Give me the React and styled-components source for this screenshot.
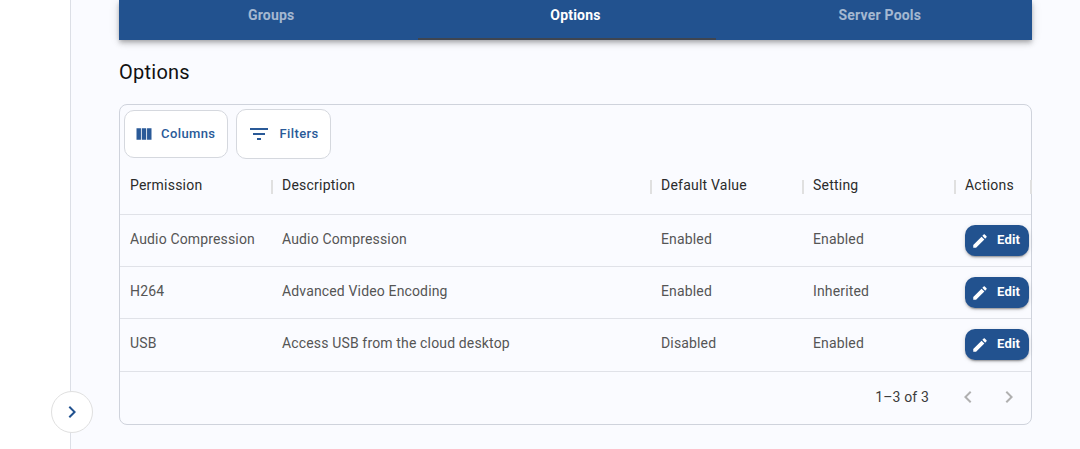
import React from 'react';
import styled, { createGlobalStyle } from 'styled-components';

const GlobalStyle = createGlobalStyle`
  html, body { margin: 0; padding: 0; height: 100%; overflow: hidden; background: #fff; }
  body { font-family: Roboto, "Liberation Sans", sans-serif; }
`;

const Page = styled.div`
  display: flex;
  height: 449px;
  overflow: hidden;
`;

const Sidebar = styled.aside`
  position: relative;
  flex: 0 0 70px;
  background: #fff;
  border-right: 1px solid #dcdfe6;
`;

const CollapseButton = styled.button`
  position: absolute;
  left: 51px;
  top: 391px;
  width: 42px;
  height: 42px;
  padding: 0;
  display: flex;
  align-items: center;
  justify-content: center;
  background: #fff;
  border: 1px solid #e0e0e0;
  border-radius: 50%;
  color: #22528f;
`;

const Main = styled.main`
  flex: 1;
  background: #fafbff;
  padding: 0 48px;
`;

const TabBar = styled.div`
  position: relative;
  display: grid;
  grid-template-columns: repeat(3, 1fr);
  height: 40px;
  background: #22528f;
  box-shadow: 0 2px 4px -1px rgba(0,0,0,.2), 0 4px 5px 0 rgba(0,0,0,.14), 0 1px 10px 0 rgba(0,0,0,.12);
`;

const Tab = styled.div`
  display: flex;
  justify-content: center;
  padding-top: 7px;
  font-size: 14px;
  line-height: 16px;
  font-weight: 700;
  letter-spacing: .2px;
  color: ${p => (p.$active ? '#fff' : 'rgba(255,255,255,.6)')};
`;

const TabIndicator = styled.span`
  position: absolute;
  left: 299px;
  bottom: 0;
  width: 298px;
  height: 2px;
  background: #3f4550;
`;

const Title = styled.h2`
  margin: 20px 0 0;
  font-size: 20px;
  line-height: 24px;
  font-weight: 400;
  letter-spacing: .25px;
  color: #111;
`;

const TableCard = styled.section`
  margin-top: 20px;
  height: 321px;
  box-sizing: border-box;
  border: 1px solid #cfd3dc;
  border-radius: 8px;
  display: flex;
  flex-direction: column;
`;

const Toolbar = styled.div`
  display: flex;
  align-items: center;
  gap: 8px;
  height: 58px;
  padding: 0 4px;
`;

const ToolButton = styled.button`
  display: flex;
  align-items: center;
  box-sizing: border-box;
  height: ${p => p.$h}px;
  gap: ${p => p.$gap}px;
  padding: 0 ${p => p.$padR}px 0 ${p => p.$padL}px;
  background: #fff;
  border: 1px solid #d5d8de;
  border-radius: 10px;
  color: #2a5a98;
  font-family: inherit;
  font-size: 13px;
  font-weight: 500;
  letter-spacing: .4px;
`;

const ToolLabel = styled.span`
  margin-bottom: 2px;
`;

const Row = styled.div`
  display: grid;
  grid-template-columns: 152px 379px 152px 152px 76px;
  height: ${p => p.$h}px;
  padding-bottom: ${p => p.$h - 52}px;
  box-sizing: border-box;
  border-bottom: 1px solid #e0e2e8;
  align-items: center;
`;

const HeaderRow = styled(Row)`
  padding-bottom: 0;
`;

const HeaderCell = styled.div`
  position: relative;
  padding: 0 0 7px 10px;
  font-size: 14px;
  font-weight: 400;
  letter-spacing: .22px;
  color: #2b2b2b;
  white-space: nowrap;

  &::after {
    content: '';
    position: absolute;
    right: -1px;
    top: 3px;
    width: 2px;
    height: 14px;
    background: #e0e0e0;
  }
`;

const Cell = styled.div`
  padding: 0 0 4px 10px;
  font-size: 14px;
  letter-spacing: .15px;
  color: #555;
  white-space: nowrap;
`;

const ActionCell = styled.div`
  padding-left: 10px;
`;

const EditButton = styled.button`
  display: flex;
  align-items: center;
  gap: 8px;
  box-sizing: border-box;
  width: 64px;
  height: 31px;
  padding: 0 0 0 6px;
  background: #22528f;
  border: 0;
  border-radius: 10px;
  color: #fff;
  font-family: inherit;
  font-size: 13px;
  font-weight: 700;
  letter-spacing: .2px;
  box-shadow: 0 3px 1px -2px rgba(0,0,0,.2), 0 2px 2px 0 rgba(0,0,0,.14), 0 1px 5px 0 rgba(0,0,0,.12);
`;

const EditLabel = styled.span`
  margin-bottom: 2px;
`;

const Pager = styled.footer`
  flex: 1;
  display: flex;
  align-items: center;
  justify-content: flex-end;
  padding: 0 10px 3px 0;
  font-size: 14px;
  letter-spacing: .15px;
  color: #3c3c3c;
`;

const PagerIcons = styled.div`
  display: flex;
  gap: 17px;
  margin-left: 27px;
  color: #b0b0b0;
`;

const Icon = ({ d, size = 24 }) => (
  <svg width={size} height={size} viewBox="0 0 24 24" fill="currentColor" style={{ flexShrink: 0 }}>
    <path d={d} />
  </svg>
);

const COLUMNS = 'M14.67 5v14H9.33V5h5.34zm1 14H21V5h-5.33v14zm-7.34 0V5H3v14h5.33z';
const FILTER = 'M10 18h4v-2h-4v2zM3 6v2h18V6H3zm3 7h12v-2H6v2z';
const EDIT = 'M3 17.25V21h3.75L17.81 9.94l-3.75-3.75L3 17.25zM20.71 7.04c.39-.39.39-1.02 0-1.41l-2.34-2.34c-.39-.39-1.02-.39-1.41 0l-1.83 1.83 3.75 3.75 1.83-1.83z';
const NEXT = 'M10 6 8.59 7.41 13.17 12l-4.58 4.59L10 18l6-6z';
const PREV = 'M15.41 7.41 14 6l-6 6 6 6 1.41-1.41L10.83 12z';

const rows = [
  ['Audio Compression', 'Audio Compression', 'Enabled', 'Enabled'],
  ['H264', 'Advanced Video Encoding', 'Enabled', 'Inherited'],
  ['USB', 'Access USB from the cloud desktop', 'Disabled', 'Enabled'],
];

export default function App() {
  return (
    <>
      <GlobalStyle />
      <Page>
        <Sidebar>
          <CollapseButton><Icon d={NEXT} /></CollapseButton>
        </Sidebar>
        <Main>
          <TabBar>
            <Tab>Groups</Tab>
            <Tab $active>Options</Tab>
            <Tab>Server Pools</Tab>
            <TabIndicator />
          </TabBar>
          <Title>Options</Title>
          <TableCard>
            <Toolbar>
              <ToolButton $h={48} $padL={9} $padR={12} $gap={7}>
                <Icon d={COLUMNS} size={20} />
                <ToolLabel>Columns</ToolLabel>
              </ToolButton>
              <ToolButton $h={50} $padL={10} $padR={11} $gap={8}>
                <Icon d={FILTER} />
                <ToolLabel>Filters</ToolLabel>
              </ToolButton>
            </Toolbar>
            <HeaderRow $h={52}>
              <HeaderCell>Permission</HeaderCell>
              <HeaderCell>Description</HeaderCell>
              <HeaderCell>Default Value</HeaderCell>
              <HeaderCell>Setting</HeaderCell>
              <HeaderCell>Actions</HeaderCell>
            </HeaderRow>
            {rows.map((r, idx) => (
              <Row $h={idx === 2 ? 53 : 52} key={r[0]}>
                {r.map((text, i) => <Cell key={i}>{text}</Cell>)}
                <ActionCell>
                  <EditButton>
                    <Icon d={EDIT} size={18} />
                    <EditLabel>Edit</EditLabel>
                  </EditButton>
                </ActionCell>
              </Row>
            ))}
            <Pager>
              1–3 of 3
              <PagerIcons>
                <Icon d={PREV} />
                <Icon d={NEXT} />
              </PagerIcons>
            </Pager>
          </TableCard>
        </Main>
      </Page>
    </>
  );
}
